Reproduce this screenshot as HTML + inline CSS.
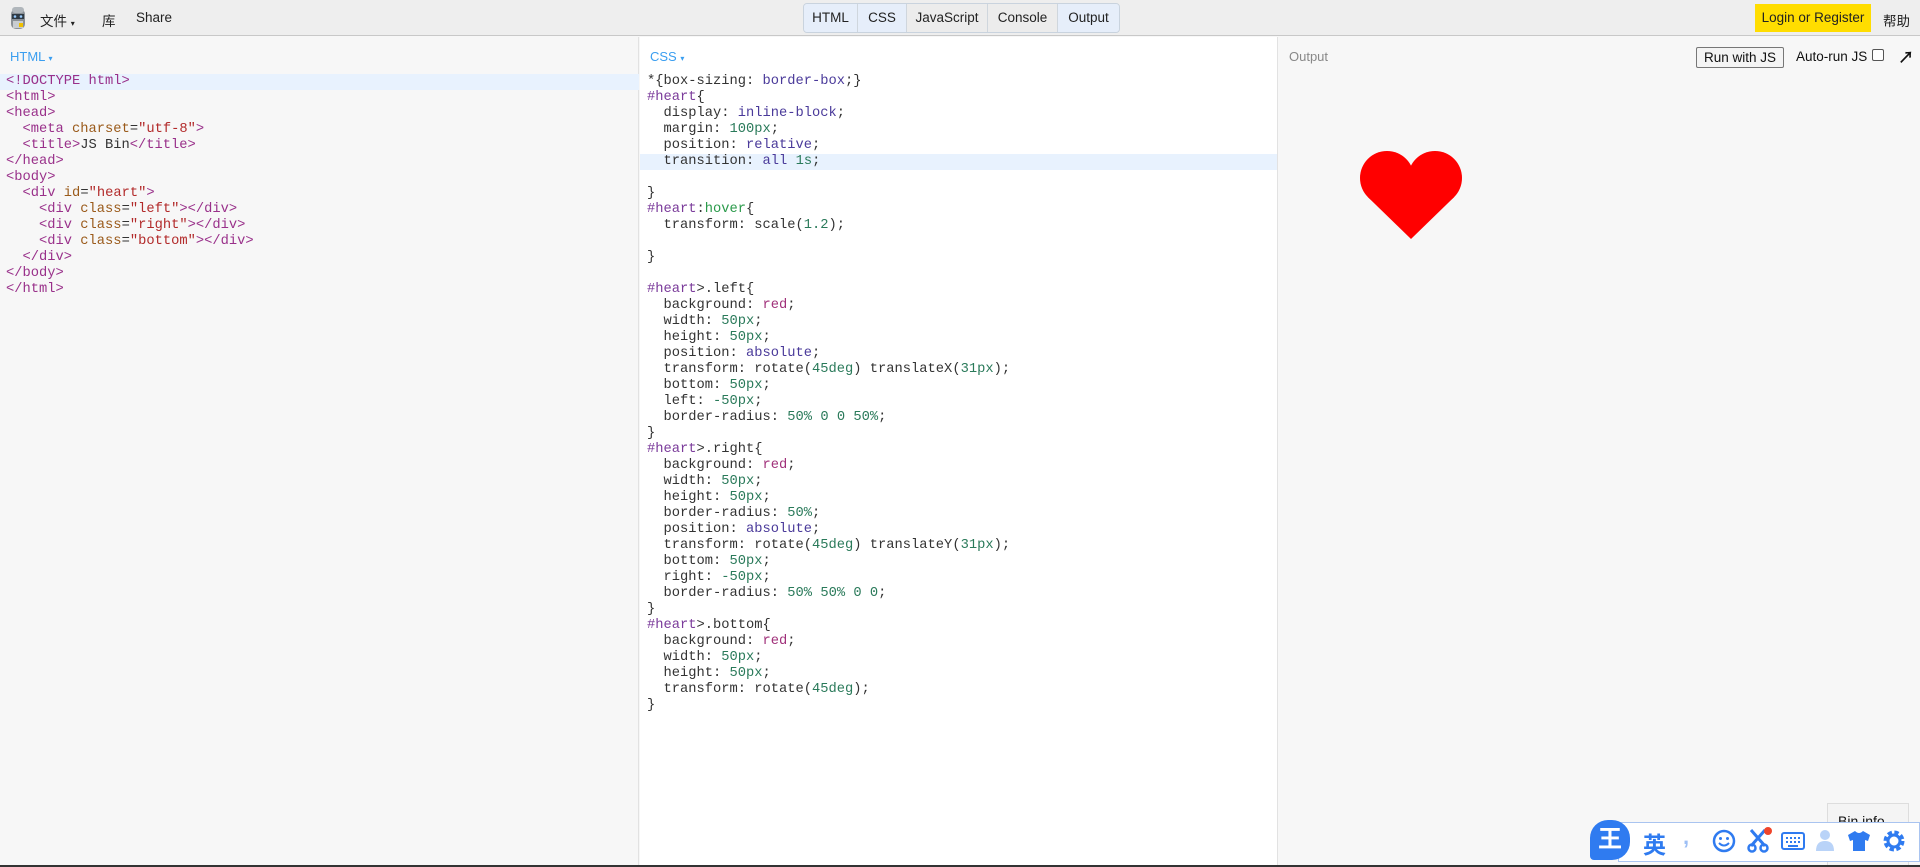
<!DOCTYPE html>
<html><head><meta charset="utf-8">
<style>
*{box-sizing:border-box;margin:0;padding:0}
body{width:1920px;height:867px;overflow:hidden;background:#f7f7f7;font-family:"Liberation Sans","Noto Sans CJK SC",sans-serif;position:relative}
.hdr{position:absolute;left:0;top:0;width:1920px;height:36px;background:#eeeeee;border-bottom:1px solid #c8c8c8}
.hdr .it{position:absolute;top:10px;font-size:13.5px;color:#222}
.tabs{position:absolute;left:803px;top:3px;height:30px;display:flex;border:1px solid #c9d3de;border-radius:4px;overflow:hidden}
.tabs div{height:28px;line-height:28px;font-size:13.5px;color:#222;text-align:center;border-right:1px solid #cfd6dd;background:#ececec}
.tabs div.a{background:#e6eefa}
.tabs div:last-child{border-right:none}
.login{position:absolute;left:1755px;top:4px;width:116px;height:28px;background:#ffdd00;font-size:13.5px;line-height:28px;text-align:center;color:#222}
.panel{position:absolute;top:37px;height:830px}
.lbl{position:absolute;top:12px;font-size:13px;color:#3a9ef0}
.code{position:absolute;top:74px;font-family:"Liberation Mono","DejaVu Sans Mono",monospace;font-size:13.75px;line-height:16px;white-space:pre;color:#333}
.hl{position:absolute;height:16px;background:#e8f2fe}
.t{color:#99308a}.at{color:#9a5a1a}.s{color:#b22a2a}.v{color:#4a3a9a}.n{color:#2a7a5a}.sel{color:#7a3a9a}.ps{color:#2a9a4a}.r{color:#a0307a}
</style></head><body>
<div class="hdr">
  <svg style="position:absolute;left:9px;top:6px" width="18" height="25" viewBox="0 0 18 25"><rect x="2" y="3" width="14" height="20" rx="5" fill="#8a9096"/><rect x="3" y="1" width="12" height="6" rx="3" fill="#b0b6bb"/><rect x="3" y="8" width="12" height="5" fill="#2f3a44"/><circle cx="6" cy="10.5" r="1.3" fill="#9cf"/><circle cx="12" cy="10.5" r="1.3" fill="#9cf"/><rect x="4" y="15" width="10" height="7" fill="#c9cdd1"/><rect x="10" y="17" width="4" height="4" fill="#f0c000"/></svg>
  <div class="it" style="left:40px">文件 <span style="font-size:8px">▾</span></div>
  <div class="it" style="left:102px">库</div>
  <div class="it" style="left:136px">Share</div>
  <div class="tabs"><div class="a" style="width:54px">HTML</div><div class="a" style="width:49px">CSS</div><div style="width:81px">JavaScript</div><div style="width:70px">Console</div><div class="a" style="width:61px">Output</div></div>
  <div class="login">Login or Register</div>
  <div class="it" style="left:1883px">帮助</div>
</div>

<div class="panel" style="left:0;width:639px;background:#f7f7f7;border-right:1px solid #e2e2e2">
  <div class="lbl" style="left:10px">HTML <span style="font-size:8px">▾</span></div>
</div>
<div class="hl" style="left:0;top:74px;width:639px"></div>
<div class="code" style="left:6px"><span class="t">&lt;!DOCTYPE html&gt;</span>
<span class="t">&lt;html&gt;</span>
<span class="t">&lt;head&gt;</span>
  <span class="t">&lt;meta</span> <span class="at">charset</span>=<span class="s">"utf-8"</span><span class="t">&gt;</span>
  <span class="t">&lt;title&gt;</span>JS Bin<span class="t">&lt;/title&gt;</span>
<span class="t">&lt;/head&gt;</span>
<span class="t">&lt;body&gt;</span>
  <span class="t">&lt;div</span> <span class="at">id</span>=<span class="s">"heart"</span><span class="t">&gt;</span>
    <span class="t">&lt;div</span> <span class="at">class</span>=<span class="s">"left"</span><span class="t">&gt;&lt;/div&gt;</span>
    <span class="t">&lt;div</span> <span class="at">class</span>=<span class="s">"right"</span><span class="t">&gt;&lt;/div&gt;</span>
    <span class="t">&lt;div</span> <span class="at">class</span>=<span class="s">"bottom"</span><span class="t">&gt;&lt;/div&gt;</span>
  <span class="t">&lt;/div&gt;</span>
<span class="t">&lt;/body&gt;</span>
<span class="t">&lt;/html&gt;</span></div>

<div class="panel" style="left:640px;width:638px;background:#fff;border-right:1px solid #e2e2e2">
  <div class="lbl" style="left:10px">CSS <span style="font-size:8px">▾</span></div>
</div>
<div class="hl" style="left:640px;top:154px;width:637px"></div>
<div class="code" style="left:647px">*{box-sizing: <span class="v">border-box</span>;}
<span class="sel">#heart</span>{
  display: <span class="v">inline-block</span>;
  margin: <span class="n">100px</span>;
  position: <span class="v">relative</span>;
  transition: <span class="v">all</span> <span class="n">1s</span>;

}
<span class="sel">#heart</span>:<span class="ps">hover</span>{
  transform: scale(<span class="n">1.2</span>);

}

<span class="sel">#heart</span>&gt;.left{
  background: <span class="r">red</span>;
  width: <span class="n">50px</span>;
  height: <span class="n">50px</span>;
  position: <span class="v">absolute</span>;
  transform: rotate(<span class="n">45deg</span>) translateX(<span class="n">31px</span>);
  bottom: <span class="n">50px</span>;
  left: <span class="n">-50px</span>;
  border-radius: <span class="n">50%</span> <span class="n">0</span> <span class="n">0</span> <span class="n">50%</span>;
}
<span class="sel">#heart</span>&gt;.right{
  background: <span class="r">red</span>;
  width: <span class="n">50px</span>;
  height: <span class="n">50px</span>;
  border-radius: <span class="n">50%</span>;
  position: <span class="v">absolute</span>;
  transform: rotate(<span class="n">45deg</span>) translateY(<span class="n">31px</span>);
  bottom: <span class="n">50px</span>;
  right: <span class="n">-50px</span>;
  border-radius: <span class="n">50%</span> <span class="n">50%</span> <span class="n">0</span> <span class="n">0</span>;
}
<span class="sel">#heart</span>&gt;.bottom{
  background: <span class="r">red</span>;
  width: <span class="n">50px</span>;
  height: <span class="n">50px</span>;
  transform: rotate(<span class="n">45deg</span>);
}</div>

<div class="panel" style="left:1278px;width:642px;background:#f7f7f7">
  <div style="position:absolute;left:11px;top:12px;font-size:13px;color:#888">Output</div>
  <div style="position:absolute;left:418px;top:10px;width:88px;height:21px;border:1px solid #777;border-radius:2px;background:#f4f4f4;font-size:13.5px;line-height:19px;text-align:center;color:#111">Run with JS</div>
  <div style="position:absolute;left:518px;top:12px;font-size:13.5px;color:#111">Auto-run JS</div>
  <div style="position:absolute;left:594px;top:12px;width:12px;height:12px;border:1px solid #555;border-radius:2px;background:#fff"></div>
  <div style="position:absolute;left:620px;top:7px;font-size:16px;font-weight:bold;color:#111">↗</div>
  <svg style="position:absolute;left:80px;top:114px" width="106" height="89" viewBox="0 0 106 89"><circle cx="29" cy="27" r="27" fill="#f00"/><circle cx="77" cy="27" r="27" fill="#f00"/><polygon points="9.9,46.1 29,27 53,15 77,27 96.1,46.1 53,88" fill="#f00"/></svg>
</div>

<div style="position:absolute;left:1827px;top:803px;width:82px;height:64px;background:#f4f4f4;border:1px solid #ddd;font-size:14px;padding:9px 0 0 10px;color:#111">Bin info</div>
<div style="position:absolute;left:1618px;top:822px;width:302px;height:40px;background:#fff;border:1px solid #a9c4f0"></div>
<div style="position:absolute;left:1590px;top:820px;width:40px;height:40px;border-radius:18px 18px 18px 4px;background:#2f7bf0;color:#fff;font-size:24px;font-weight:bold;text-align:center;line-height:40px">王</div>
<div style="position:absolute;left:1643px;top:826px;font-size:23px;font-weight:bold;color:#2f7bf0">英</div>
<div style="position:absolute;left:1683px;top:824px;font-size:22px;font-weight:bold;color:#9dbff5">,</div>
<svg style="position:absolute;left:1712px;top:829px" width="24" height="24" viewBox="0 0 24 24"><circle cx="12" cy="12" r="10" fill="none" stroke="#2f7bf0" stroke-width="2.5"/><circle cx="8.5" cy="9.5" r="1.5" fill="#2f7bf0"/><circle cx="15.5" cy="9.5" r="1.5" fill="#2f7bf0"/><path d="M7 14 Q12 19 17 14" fill="none" stroke="#2f7bf0" stroke-width="2"/></svg>
<svg style="position:absolute;left:1746px;top:826px" width="28" height="28" viewBox="0 0 28 28"><path d="M5 4 L19 20 M19 4 L5 20" stroke="#2f7bf0" stroke-width="3"/><circle cx="6" cy="22" r="3.5" fill="none" stroke="#2f7bf0" stroke-width="2.5"/><circle cx="18" cy="22" r="3.5" fill="none" stroke="#2f7bf0" stroke-width="2.5"/><circle cx="22" cy="5" r="4" fill="#f0452a"/></svg>
<svg style="position:absolute;left:1781px;top:832px" width="24" height="18" viewBox="0 0 24 18"><rect x="1" y="1" width="22" height="16" rx="2" fill="none" stroke="#2f7bf0" stroke-width="2"/><path d="M5 6h2M9 6h2M13 6h2M17 6h2M5 10h2M9 10h2M13 10h2M17 10h2M7 14h10" stroke="#2f7bf0" stroke-width="2"/></svg>
<svg style="position:absolute;left:1815px;top:829px" width="20" height="22" viewBox="0 0 20 22"><circle cx="10" cy="6" r="5" fill="#b9d3f8"/><path d="M1 22 Q1 12 10 12 Q19 12 19 22Z" fill="#b9d3f8"/></svg>
<svg style="position:absolute;left:1847px;top:830px" width="24" height="22" viewBox="0 0 24 22"><path d="M8 1 L1 5 L3 11 L6 10 L6 21 L18 21 L18 10 L21 11 L23 5 L16 1 Q12 5 8 1Z" fill="#2f7bf0"/></svg>
<svg style="position:absolute;left:1882px;top:829px" width="24" height="24" viewBox="0 0 24 24"><circle cx="12" cy="12" r="8" fill="none" stroke="#2f7bf0" stroke-width="5" stroke-dasharray="4 2.3"/><circle cx="12" cy="12" r="6" fill="none" stroke="#2f7bf0" stroke-width="3"/></svg>
<div style="position:absolute;left:0;top:865px;width:1920px;height:2px;background:#333"></div>
</body></html>
